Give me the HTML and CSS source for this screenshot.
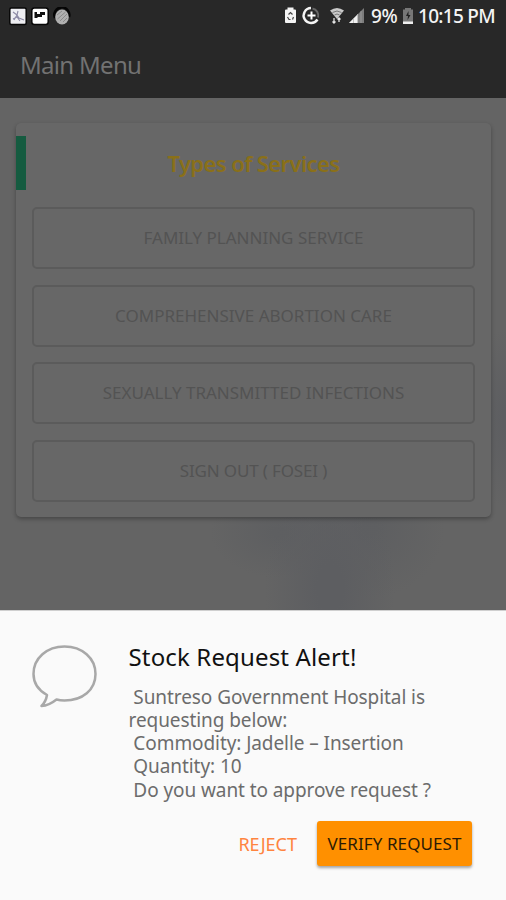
FILE: index.html
```html
<!DOCTYPE html>
<html lang="en">
<head>
<meta charset="utf-8">
<title>Main Menu</title>
<link rel="stylesheet" href="styles.css">
</head>
<body>
<div class="screen">
  <header class="top">
    <div class="status">
      <svg class="notif" width="62" height="20" viewBox="0 0 62 20">
        <g stroke="#070707" stroke-width="1.5">
          <rect x=".8" y="1" width="16.400" height="16.400" rx="1.5" fill="#eeeef2"/>
          <rect x="22.800" y="1" width="16.400" height="16.400" rx="2.5" fill="#fff"/>
        </g>
        <path d="M46 11a7.500 7.500 0 1 1 14-1" fill="none" stroke="#050505" stroke-width="2.500"/>
        <ellipse cx="53" cy="10" rx="6.800" ry="7.500" fill="#b0b0b0"/>
        <path d="M4 5l4 3-3 5M8 8l2 3 5 2M9 4l-1 4M4 12l4-2 3 4" fill="none" stroke="#8d8aa5" stroke-width="1.1"/>
        <path d="M25.500 11V5H28v2h3V5h5v3h-3v2h-4.500v1z" fill="#111"/>
        <path d="M48 8l5-4M48.500 12l8-7M51 14l7-7M54 15l4-4" stroke="#898989" fill="none"/>
      </svg>
      <svg class="system" width="83" height="22" viewBox="0 0 83 22">
        <path d="M3 4.500h1.500V2.500h6v2H12q1 0 1 1V17q0 1-1 1H3q-1 0-1-1V5.500q0-1 1-1z" fill="#f4f4f4"/>
        <path d="M5.500 9.500l2-2 2 2M4.500 12l1.500 2.500h1.500M10.500 12L9.500 14.500" fill="none" stroke="#444" stroke-width="1.200"/>
        <path d="M29.500 3.500a7.200 7.200 0 0 1 5.500 9" fill="none" stroke="#666" stroke-width="2"/>
        <path d="M28 3A7.500 7.500 0 1 0 34.500 14.500" fill="none" stroke="#f4f4f4" stroke-width="2.400"/>
        <path d="M28.500 6.500v8M24.500 10.500h8" stroke="#fff" stroke-width="2"/>
        <path d="M47 5.500q7-5 14 0L54 14z" fill="#c9c9c9"/>
        <path d="M49.500 7.500q4.500-3 9 0M51.500 10q2.500-2 5 0" fill="none" stroke="#777"/>
        <path d="M51 13v5M49.500 16.500L51 18l1.500-1.500M56 17v-4M54.500 14.500L56 13l1.500 1.500" fill="none" stroke="#e7e7e7" stroke-width="1.300"/>
        <path d="M66 18L81 3v15z" fill="#7c7c7c"/>
        <path d="M66 18l9-9v9z" fill="#f1f1f1"/>
        <path d="M70.500 13v5M74.500 9v9M78 6v12" stroke="#aaa" stroke-width=".7"/>
      </svg>
      <span class="percent">9%</span>
      <svg class="battery" width="12" height="18" viewBox="0 0 12 18">
        <path d="M1 2.500h2V1h6v1.500h2V17H1z" fill="#777"/>
        <path d="M1 14.500h10V17H1z" fill="#eee"/>
        <path d="M6.500 4L4 9h2l-.5 4L8.500 8h-2z" fill="#222"/>
      </svg>
      <span class="clock">10:15 PM</span>
    </div>
    <h1 class="title">Main Menu</h1>
  </header>
  <main class="content">
    <section class="card">
      <div class="card-head"><h2 class="heading">Types of Services</h2></div>
      <div class="options">
        <button class="option family">FAMILY PLANNING SERVICE</button>
        <button class="option care">COMPREHENSIVE ABORTION CARE</button>
        <button class="option infections">SEXUALLY TRANSMITTED INFECTIONS</button>
        <button class="option signout">SIGN OUT ( FOSEI )</button>
      </div>
    </section>
  </main>
  <section class="sheet">
    <svg class="bubble" width="68" height="66" viewBox="0 0 68 66">
      <path d="M16 51C7 46 2.500 38 2.500 30 2.500 14 16 2.500 33.500 2.500S64.500 14 64.500 30 51.500 56.500 33.500 56.500Q29 56.500 25.500 55.500 18 61.500 10.500 62 15 57.500 16 51z" fill="none" stroke="#a8a8a8" stroke-width="2.500" stroke-linejoin="round"/>
    </svg>
    <div class="alert">
      <h2 class="alert-title">Stock Request Alert!</h2>
      <div class="message">
        <span class="l1"> Suntreso Government Hospital is</span>
        <span class="l2">requesting below:</span>
        <span class="l3"> Commodity: Jadelle – Insertion</span>
        <span class="l4"> Quantity: 10</span>
        <span class="l5"> Do you want to approve request ?</span>
      </div>
      <div class="actions">
        <button class="reject">REJECT</button>
        <button class="verify">VERIFY REQUEST</button>
      </div>
    </div>
  </section>
</div>
</body>
</html>
```
FILE: styles.css
```css
* { box-sizing: border-box; }
body { margin: 0; font-family: "Noto Sans", sans-serif; }
h1, h2 { margin: 0; font-weight: 400; }
button { border: 0; padding: 0; background: none; font-family: inherit; white-space: nowrap; }
svg { display: block; flex: none; }
.screen { width: 506px; height: 900px; overflow: hidden; display: flex; flex-direction: column; background: #646464; }
.top { height: 98px; background: #282828; flex: none; }
.status { height: 33px; padding: 0 11px 1px 9px; display: flex; align-items: center; color: #f4f4f4; font-weight: 500; font-size: 19px; white-space: nowrap; }
.notif { margin-top: 1px; }
.system { margin-left: 212px; }
.percent { margin-left: 5px; width: 29px; letter-spacing: -0.3px; }
.battery { margin-left: 2px; }
.clock { margin-left: auto; letter-spacing: -0.7px; }
.title { margin-left: 20px; height: 66px; line-height: 64px; font-size: 24px; letter-spacing: -0.7px; color: #727272; white-space: nowrap; }
.content {
  height: 512px; flex: none; padding: 25px 15px 0 16px;
  background:
    radial-gradient(ellipse 65px 120px at 330px 490px, #5d5e61 20%, transparent 100%),
    radial-gradient(ellipse 70px 45px at 280px 435px, #5e5f61 10%, transparent 100%),
    radial-gradient(ellipse 75px 70px at 370px 430px, #5e5f61 10%, transparent 100%),
    radial-gradient(ellipse 35px 90px at 506px 320px, #5d5e61 10%, transparent 100%),
    #646464;
}
.card { height: 394px; border-radius: 5px; background: #676767; box-shadow: 0 2px 4px rgba(0,0,0,.3); padding-top: 13px; }
.card-head { height: 54px; border-left: 10px solid #155b40; display: flex; justify-content: center; align-items: center; padding-right: 10px; }
.heading { font-size: 22px; font-weight: 600; letter-spacing: -0.6px; color: #8a7019; white-space: nowrap; }
.options { padding: 17px 16px 0; display: grid; grid-auto-rows: 62px; row-gap: 15.7px; }
.option { border: 2px solid #5b5b5b; border-radius: 5px; padding-bottom: 1px; font-size: 17px; color: #535353; }
.signout { letter-spacing: -0.15px; }
.sheet { flex: 1; background: #fafafa; border-top: 1px solid #cfcfcf; display: flex; }
.bubble { margin: 33px 0 0 31px; }
.alert { margin-left: 29.5px; width: 343.5px; padding-top: 28px; }
.alert-title { font-size: 24px; line-height: 36px; letter-spacing: 0.15px; color: #111; white-space: nowrap; }
.message { margin-top: 10.5px; color: #6c6c6c; font-size: 19px; line-height: 23.3px; letter-spacing: -0.08px; }
.message span { display: block; white-space: pre; }
.actions { margin-top: 19.5px; display: flex; justify-content: flex-end; gap: 20px; }
.reject { font-size: 18px; color: #ff843f; }
.verify { width: 155px; height: 45px; border-radius: 3px; background: #ff9000; color: #2c1b04; font-size: 17px; letter-spacing: 0.1px; box-shadow: 0 2px 3px rgba(0,0,0,.35); }
```
